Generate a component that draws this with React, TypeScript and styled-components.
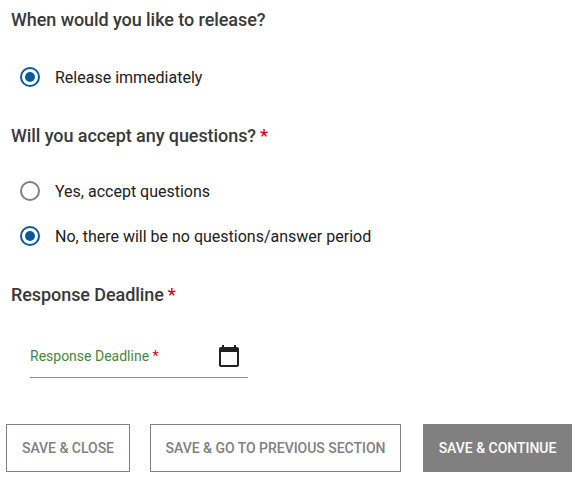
import React from "react";
import styled, { createGlobalStyle } from "styled-components";

const Global = createGlobalStyle`
  html, body { margin: 0; padding: 0; background: #fff; }
  body { font-family: Roboto, "Liberation Sans", sans-serif; }
`;

const Page = styled.div`
  width: 583px;
  height: 483px;
  overflow: hidden;
  display: flex;
  flex-direction: column;
`;

const Form = styled.div`
  display: flex;
  flex-direction: column;
  padding: 9px 11px 0;
`;

const Heading = styled.div<{ $mt?: number }>`
  font-size: 18px;
  font-weight: 500;
  line-height: 21px;
  letter-spacing: -0.07px;
  color: #393939;
  margin-top: ${(p) => p.$mt ?? 0}px;
`;

const Star = styled.span`
  color: #d0021b;
  margin-left: 4px;
`;

const RadioGroup = styled.div<{ $mt: number }>`
  display: flex;
  flex-direction: column;
  gap: 25px;
  margin-top: ${(p) => p.$mt}px;
  padding-left: 9px;
`;

const RadioRow = styled.div`
  display: flex;
  align-items: center;
  gap: 15px;
  height: 20px;
  font-size: 16px;
  color: #212121;
`;

const Radio = styled.span<{ $on?: boolean }>`
  box-sizing: border-box;
  width: 20px;
  height: 20px;
  border-radius: 50%;
  border: 2px solid ${(p) => (p.$on ? "#0b5a96" : "#808080")};
  display: flex;
  align-items: center;
  justify-content: center;
  &::after {
    content: "";
    display: ${(p) => (p.$on ? "block" : "none")};
    width: 10px;
    height: 10px;
    border-radius: 50%;
    background: #0b5a96;
  }
`;

const DateField = styled.div`
  box-sizing: border-box;
  width: 218px;
  height: 50px;
  margin: 23px 0 0 19px;
  border-bottom: 1px solid #8a8a8a;
  display: flex;
  align-items: center;
  justify-content: space-between;
  padding: 6px 7px 0 0;
`;

const FieldLabel = styled.label`
  font-size: 14px;
  color: #43883a;
`;

const FieldStar = styled.span`
  color: #d0021b;
`;

const Actions = styled.div`
  display: flex;
  gap: 20px;
  margin: 46px 0 0 6px;
`;

const Button = styled.button<{ $width: number; $primary?: boolean }>`
  box-sizing: border-box;
  width: ${(p) => p.$width}px;
  height: 48px;
  margin-left: ${(p) => (p.$primary ? 2 : 0)}px;
  padding: 0;
  font-family: inherit;
  font-size: 14px;
  font-weight: 500;
  letter-spacing: -0.03px;
  text-transform: uppercase;
  color: ${(p) => (p.$primary ? "#fff" : "#808080")};
  background: ${(p) => (p.$primary ? "#808080" : "#fff")};
  border: ${(p) => (p.$primary ? "none" : "1px solid #808080")};
`;

export default function App() {
  return (
    <Page>
      <Global />
      <Form>
        <Heading>When would you like to release?</Heading>
        <RadioGroup $mt={37}>
          <RadioRow><Radio $on />Release immediately</RadioRow>
        </RadioGroup>
        <Heading $mt={38}>Will you accept any questions?<Star>*</Star></Heading>
        <RadioGroup $mt={35}>
          <RadioRow><Radio />Yes, accept questions</RadioRow>
          <RadioRow><Radio $on />No, there will be no questions/answer period</RadioRow>
        </RadioGroup>
        <Heading $mt={38}>Response Deadline<Star>*</Star></Heading>
        <DateField>
          <FieldLabel>Response Deadline <FieldStar>*</FieldStar></FieldLabel>
          <svg width="24" height="24" viewBox="0 0 24 24" fill="#212121">
            <path d="M20 3h-1V1h-2v2H7V1H5v2H4c-1.1 0-2 .9-2 2v16c0 1.1.9 2 2 2h16c1.1 0 2-.9 2-2V5c0-1.1-.9-2-2-2zm0 18H4V8h16v13z" />
          </svg>
        </DateField>
      </Form>
      <Actions>
        <Button $width={124}>Save &amp; Close</Button>
        <Button $width={251}>Save &amp; Go to previous section</Button>
        <Button $width={149} $primary>Save &amp; Continue</Button>
      </Actions>
    </Page>
  );
}
